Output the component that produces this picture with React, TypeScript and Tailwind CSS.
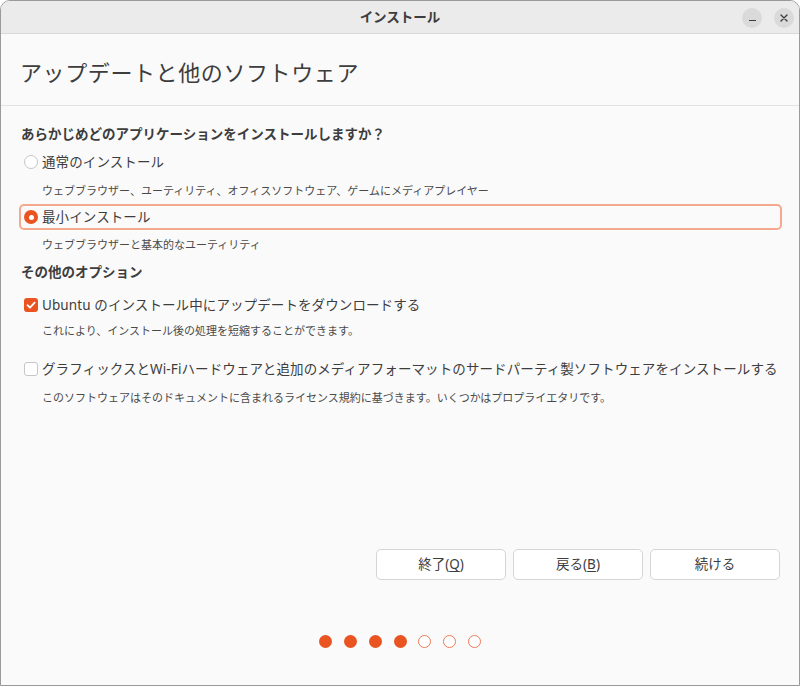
import React from 'react';

const font = { fontFamily: '"Noto Sans", "Noto Sans CJK JP", sans-serif' };

const Radio: React.FC<{ checked?: boolean }> = ({ checked }) =>
  checked ? (
    <span className="flex h-[14px] w-[14px] shrink-0 items-center justify-center rounded-full bg-[#e95420]">
      <span className="h-[5px] w-[5px] rounded-full bg-white" />
    </span>
  ) : (
    <span className="h-[14px] w-[14px] shrink-0 rounded-full border border-[#c6c6c6] bg-white" />
  );

const Check: React.FC<{ checked?: boolean }> = ({ checked }) =>
  checked ? (
    <span className="flex h-[14px] w-[14px] shrink-0 items-center justify-center rounded-[3px] bg-[#e95420]">
      <svg width="10" height="10" viewBox="0 0 10 10" fill="none">
        <path d="M1.5 5.2 L4 7.6 L8.6 2.6" stroke="white" strokeWidth="1.8" strokeLinecap="round" strokeLinejoin="round" />
      </svg>
    </span>
  ) : (
    <span className="h-[14px] w-[14px] shrink-0 rounded-[3px] border border-[#c6c6c6] bg-white" />
  );

const Option: React.FC<{ control: React.ReactNode; label: string; focused?: boolean }> = ({ control, label, focused }) => (
  <div
    className={`-ml-[2px] flex h-[26px] items-center gap-[4px] rounded-[5px] border-2 pl-[3px] ${
      focused ? 'border-[#f5aa8f]' : 'border-transparent'
    }`}
  >
    {control}
    <span className="text-[13.5px] leading-[20px] tracking-[0.1px] text-[#3d3d3d]">{label}</span>
  </div>
);

const Desc: React.FC<{ children: React.ReactNode; className?: string }> = ({ children, className }) => (
  <div className={`pl-[21px] text-[11px] leading-[16px] text-[#4a4a4a] ${className ?? ''}`}>{children}</div>
);

export default function App() {
  const steps = [true, true, true, true, false, false, false];

  return (
    <div className="h-[687px] w-[800px] bg-white" style={font}>
      <div className="flex h-[686px] flex-col overflow-hidden rounded-t-[10px] border border-[#9a9a9a] bg-[#fafafa]">
        {/* title bar */}
        <div className="relative flex h-[33px] shrink-0 items-center justify-center border-b border-[#d8d8d8] bg-[#ebebeb]">
          <span className="text-[13.5px] font-bold text-[#3d3d3d]">インストール</span>
          <div className="absolute right-[5px] top-[7px] flex gap-[12px]">
            <span className="flex h-[20px] w-[20px] items-center justify-center rounded-full bg-[#dadada]">
              <span className="mt-[5px] h-[1.5px] w-[7px] bg-[#3d3d3d]" />
            </span>
            <span className="flex h-[20px] w-[20px] items-center justify-center rounded-full bg-[#dadada]">
              <svg width="8" height="8" viewBox="0 0 8 8">
                <path d="M1 1 L7 7 M7 1 L1 7" stroke="#3d3d3d" strokeWidth="1.4" strokeLinecap="round" />
              </svg>
            </span>
          </div>
        </div>

        {/* page title */}
        <div className="h-[72px] shrink-0 border-b border-[#e3e3e3] px-[19px] pt-[23px]">
          <h1 className="text-[22px] leading-[30px] tracking-[0.6px] text-[#3d3d3d]">アップデートと他のソフトウェア</h1>
        </div>

        {/* options */}
        <div className="flex flex-col pl-[20px] pr-[17px]">
          <div className="mt-[18px] text-[13.5px] font-bold leading-[20px] text-[#3d3d3d]">
            あらかじめどのアプリケーションをインストールしますか？
          </div>
          <div className="mt-[5px]">
            <Option control={<Radio />} label="通常のインストール" />
          </div>
          <Desc className="mt-[8px]">ウェブブラウザー、ユーティリティ、オフィスソフトウェア、ゲームにメディアプレイヤー</Desc>
          <div className="mt-[5px]">
            <Option control={<Radio checked />} label="最小インストール" focused />
          </div>
          <Desc className="mt-[7px]">ウェブブラウザーと基本的なユーティリティ</Desc>

          <div className="mt-[9px] text-[13.5px] font-bold leading-[20px] text-[#3d3d3d]">その他のオプション</div>
          <div className="mt-[10px]">
            <Option control={<Check checked />} label="Ubuntu のインストール中にアップデートをダウンロードする" />
          </div>
          <Desc className="mt-[5px]">これにより、インストール後の処理を短縮することができます。</Desc>
          <div className="mt-[17px]">
            <Option
              control={<Check />}
              label="グラフィックスとWi-Fiハードウェアと追加のメディアフォーマットのサードパーティ製ソフトウェアをインストールする"
            />
          </div>
          <Desc className="mt-[8px]">このソフトウェアはそのドキュメントに含まれるライセンス規約に基づきます。いくつかはプロプライエタリです。</Desc>
        </div>

        {/* buttons */}
        <div className="mt-auto flex justify-end gap-[7px] pr-[19px]">
          {[
            { t: '終了(', k: 'Q' },
            { t: '戻る(', k: 'B' },
            { t: '続ける', k: '' },
          ].map((b) => (
            <button
              key={b.t}
              className="h-[31px] w-[130px] rounded-[5px] border border-[#d5d5d5] bg-white text-[13.5px] text-[#3d3d3d]"
            >
              {b.t}
              {b.k && (
                <>
                  <span className="underline underline-offset-2">{b.k}</span>)
                </>
              )}
            </button>
          ))}
        </div>

        {/* progress dots */}
        <div className="mb-[37px] mt-[55px] flex justify-center gap-[11.7px]">
          {steps.map((done, i) => (
            <span
              key={i}
              className={`h-[13px] w-[13px] rounded-full ${
                done ? 'bg-[#e95420]' : 'border-[1.5px] border-[#ef7a55] bg-white'
              }`}
            />
          ))}
        </div>
      </div>
    </div>
  );
}
